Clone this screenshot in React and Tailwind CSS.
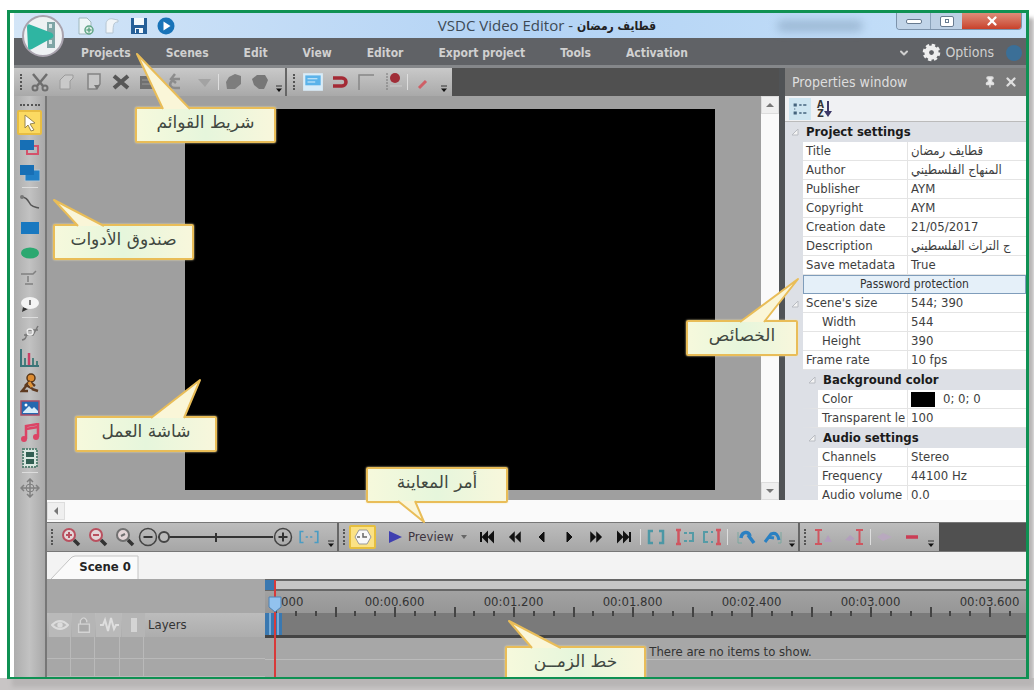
import { X, ChevronDown, Pin } from "lucide-react";

const menuItems = ["Projects", "Scenes", "Edit", "View", "Editor", "Export project", "Tools", "Activation"];

const properties = [
  { type: "group", label: "Project settings" },
  { label: "Title", value: "قطايف رمضان" },
  { label: "Author", value: "المنهاج الفلسطيني" },
  { label: "Publisher", value: "AYM" },
  { label: "Copyright", value: "AYM" },
  { label: "Creation date", value: "21/05/2017" },
  { label: "Description", value: "ج التراث الفلسطيني" },
  { label: "Save metadata", value: "True" },
  { type: "button", label: "Password protection" },
  { label: "Scene's size", value: "544; 390", open: true },
  { label: "Width", value: "544", indent: true },
  { label: "Height", value: "390", indent: true },
  { label: "Frame rate", value: "10 fps" },
  { type: "group", label: "Background color", indent: true },
  { label: "Color", value: "0; 0; 0", indent: true, nested: true, swatch: true },
  { label: "Transparent le", value: "100", indent: true, nested: true },
  { type: "group", label: "Audio settings", indent: true },
  { label: "Channels", value: "Stereo", indent: true, nested: true },
  { label: "Frequency", value: "44100 Hz", indent: true, nested: true },
  { label: "Audio volume", value: "0.0", indent: true, nested: true },
];

const times = ["00:00.600", "00:01.200", "00:01.800", "00:02.400", "00:03.000", "00:03.600"];

function Icon({ children, className = "size-5" }) {
  return (
    <svg viewBox="0 0 20 20" fill="none" className={`${className} shrink-0`} aria-hidden="true">
      {children}
    </svg>
  );
}

function ToolButton({ label, children, className = "w-[27px]" }) {
  return (
    <button type="button" aria-label={label} className={`flex h-6 shrink-0 items-center justify-center ${className}`}>
      {children}
    </button>
  );
}

function Grip() {
  return <span className="mx-1 h-4 w-0 shrink-0 border-l-2 border-dotted border-[#555]" />;
}

function Divider() {
  return <span className="h-4 w-px shrink-0 bg-[#dedede]" />;
}

function More() {
  return (
    <button type="button" aria-label="More buttons" className="flex h-6 w-3 shrink-0 items-end justify-center pb-px">
      <svg viewBox="0 0 8 8" className="size-2" aria-hidden="true">
        <path d="M1 1h6" stroke="#333" />
        <path d="M1 3.5h6L4 7z" fill="#111" />
      </svg>
    </button>
  );
}

function Callout({ position, tail, children }) {
  return (
    <div className={`absolute z-20 ${position}`}>
      <div className="flex h-9 items-center justify-center rounded-xs border-2 border-[#e9bd58] bg-linear-to-r from-[#f6f9dc] via-[#e6f6dc] to-[#f8f7dc] pb-1 font-['DejaVu_Sans',sans-serif] text-[17px] whitespace-nowrap text-[#414841] shadow-[0_0_2px_#f7e7ae]">
        <span dir="rtl">{children}</span>
      </div>
      <svg className="absolute top-0 left-0 h-9 w-full overflow-visible" aria-hidden="true">
        <path d={tail} fill="#faf6d8" stroke="#e9bd58" strokeWidth="2" strokeLinejoin="round" />
      </svg>
    </div>
  );
}

function TitleBar() {
  return (
    <header className="flex h-[25px] shrink-0 items-center bg-linear-to-r from-[#d3e5f7] via-[#b3d3f5] to-[#c6e0f8] pl-[61px]">
      <div className="flex w-[110px] shrink-0 gap-[7px]">
        <button type="button" aria-label="New project">
          <Icon>
            <path d="M4 2h8l4 4v12H4z" fill="#eef6f8" stroke="#9fb8bd" />
            <circle cx="14" cy="14" r="4" fill="#dceee6" stroke="#5fa586" strokeWidth="1.500" />
            <path d="M14 11.500v5M11.500 14h5" stroke="#5fa586" strokeWidth="1.500" />
          </Icon>
        </button>
        <button type="button" aria-label="Open project">
          <Icon>
            <path d="M4 17V8c0-4 4-6 7-5l5 1v2c-4 0-5 2-5 11z" fill="#f1f5f8" stroke="#b6c6d2" />
          </Icon>
        </button>
        <button type="button" aria-label="Save project">
          <Icon>
            <path d="M2 2h16v16H2z" fill="#255f98" />
            <path d="M5 2h10v7H5zM6 12h8v5H6z" fill="#f3f8fc" />
            <path d="M7 13h3v4H7z" fill="#255f98" />
          </Icon>
        </button>
        <button type="button" aria-label="Play">
          <Icon>
            <circle cx="10" cy="10" r="8.500" fill="#1873b8" />
            <path d="M7.500 5.500v9l7-4.500z" fill="#fff" />
          </Icon>
        </button>
      </div>
      <h1 className="flex min-w-0 flex-1 items-center justify-center gap-1 pl-[132px] font-['Open_Sans',sans-serif] text-[15px] whitespace-nowrap text-[#3d4a55]">
        <span>VSDC Video Editor -</span>
        <span dir="rtl" className="font-['DejaVu_Sans_Condensed','DejaVu_Sans',sans-serif] text-[12px] font-bold text-[#222]">
          قطايف رمضان
        </span>
      </h1>
      <span className="mr-[33px] h-3 w-[86px] shrink-0 rounded-full bg-[#7f9bb8]/50 blur-xs" />
      <div className="mr-1 flex h-[17px] w-[126px] shrink-0 self-start overflow-hidden rounded-b-sm border border-t-0 border-[#7d93ab]">
        <button type="button" aria-label="Minimize" className="flex w-[34px] items-center justify-center border-r border-[#8ba2b9] bg-[#c1d4e8]">
          <span className="h-[5px] w-4 rounded-xs border border-[#687b90] bg-white" />
        </button>
        <button type="button" aria-label="Maximize" className="flex w-[31px] items-center justify-center bg-[#bdd0e4]">
          <span className="flex h-[11px] w-3.5 items-center justify-center rounded-xs border border-[#687b90] bg-white">
            <span className="size-1 border border-[#687b90]" />
          </span>
        </button>
        <button type="button" aria-label="Close" className="flex flex-1 items-center justify-center bg-linear-to-b from-[#dd8c79] to-[#c8402a]">
          <X className="size-3.5 text-white" strokeWidth={4} />
        </button>
      </div>
    </header>
  );
}

function MenuBar() {
  return (
    <nav className="flex h-[30px] shrink-0 items-center border-b-3 border-[#85878a] bg-[#606266] pt-0.5 pr-1 pl-[67px] text-[#d0d0d0]">
      <ul className="flex gap-[35px] text-[12px] font-bold whitespace-nowrap">
        {menuItems.map((item) => (
          <li key={item}>
            <a href="#">{item}</a>
          </li>
        ))}
      </ul>
      <div className="ml-auto flex items-center">
        <ChevronDown className="mr-3 size-3" strokeWidth={4} />
        <button type="button" className="flex items-center gap-1 text-[14px]">
          <svg viewBox="0 0 20 20" className="size-[19px]" aria-hidden="true">
            <circle cx="10" cy="10" r="7.500" fill="none" stroke="#eee" strokeWidth="3.500" strokeDasharray="3.400 2.490" />
            <circle cx="10" cy="10" r="5" fill="none" stroke="#eee" strokeWidth="5" />
            <circle cx="10" cy="10" r="2" fill="#606266" />
          </svg>
          Options
        </button>
        <span className="ml-3 size-4 rounded-full bg-[#3b6f97]" />
      </div>
    </nav>
  );
}

function EditToolbar() {
  return (
    <div className="flex h-7 shrink-0 bg-[#505050]">
      <div className="flex items-center border-r-2 border-[#666] bg-linear-to-b from-[#c9c9c9] to-[#a9a9a9] pl-0.5">
        <Grip />
        <ToolButton label="Cut">
          <Icon>
            <path d="M3 2l10 12M17 2L7 14" stroke="#6e6e6e" strokeWidth="2.500" />
            <circle cx="5" cy="16" r="2.500" stroke="#6e6e6e" strokeWidth="2" />
            <circle cx="15" cy="16" r="2.500" stroke="#6e6e6e" strokeWidth="2" />
          </Icon>
        </ToolButton>
        <ToolButton label="Copy">
          <Icon><path d="M3 17V8l5-5h8v3l-3 3v8z" fill="#c9c9c9" stroke="#9a9a9a" /></Icon>
        </ToolButton>
        <ToolButton label="Paste">
          <Icon>
            <path d="M4 2h12v10l-4 5H4z" fill="#c6c6c6" stroke="#848484" strokeWidth="1.500" />
            <path d="M10 13l6 0-3 5z" fill="#777" />
          </Icon>
        </ToolButton>
        <ToolButton label="Delete">
          <Icon><path d="M3 4l14 12M17 4L3 16" stroke="#575757" strokeWidth="4" /></Icon>
        </ToolButton>
        <ToolButton label="Properties">
          <Icon>
            <path d="M2 4h15v13H2z" fill="#707070" />
            <path d="M4 8h10M4 12h10" stroke="#999" />
          </Icon>
        </ToolButton>
        <ToolButton label="Undo" className="w-[30px]">
          <Icon><path d="M14 16H9c-4 0-6-3-4-6l3-3h6M9 2L5 7l5 4" stroke="#8c8c8c" strokeWidth="2.500" /></Icon>
        </ToolButton>
        <ToolButton label="Redo">
          <Icon><path d="M3 7h13l-6 8z" fill="#a3a3a3" /></Icon>
        </ToolButton>
        <Divider />
        <ToolButton label="Group">
          <Icon><path d="M3 10l3-5 6-3 6 2v8l-6 5H4z" fill="#7d7d7d" /></Icon>
        </ToolButton>
        <ToolButton label="Ungroup">
          <Icon><path d="M2 7l5-4h8l3 5-2 5-2 4H9l-5-4z" fill="#777" /></Icon>
        </ToolButton>
        <More />
      </div>
      <div className="flex items-center bg-linear-to-b from-[#c9c9c9] to-[#a9a9a9] pr-0.5">
        <span className="w-0.5" />
        <Grip />
        <ToolButton label="Show grid">
          <Icon className="size-[22px]">
            <path d="M1 2h18v16H1z" fill="#d9ecf8" />
            <path d="M3 4h14v9H3z" fill="#5bb3ea" />
            <path d="M5 7h9M5 10h7" stroke="#d9f0fc" />
          </Icon>
        </ToolButton>
        <ToolButton label="Snap">
          <Icon><path d="M3 6h9a4 4 0 010 8H3" stroke="#a42a35" strokeWidth="3.500" /></Icon>
        </ToolButton>
        <ToolButton label="Align to edge">
          <Icon><path d="M2 18V3h15" stroke="#878787" strokeWidth="1.500" /></Icon>
        </ToolButton>
        <ToolButton label="Magnet to edge">
          <Icon>
            <path d="M3 1v18" stroke="#777" strokeDasharray="2 1" />
            <circle cx="11" cy="6" r="5" fill="#a02d37" />
            <path d="M6 14h12" stroke="#ccc" />
          </Icon>
        </ToolButton>
        <Divider />
        <ToolButton label="Draw" className="w-[30px]">
          <Icon><path d="M6 16l7-7" stroke="#cf5f66" strokeWidth="3" /></Icon>
        </ToolButton>
        <More />
      </div>
    </div>
  );
}

function SideSeparator() {
  return <span className="my-0.5 h-px w-4 shrink-0 bg-[#ddd]" />;
}

function SideButton({ label, active, children }) {
  return (
    <button
      type="button"
      aria-label={label}
      className={
        active
          ? "flex h-[25px] w-[25px] shrink-0 items-center justify-center rounded-xs border-2 border-[#e8bd42] bg-[#fbda62]"
          : "flex h-[25px] w-[25px] shrink-0 items-center justify-center"
      }
    >
      {children}
    </button>
  );
}

function ToolBox() {
  return (
    <aside className="flex w-[33px] shrink-0 flex-col items-center border-r-2 border-[#777] bg-linear-to-r from-[#adadad] via-[#c2c2c2] to-[#a9a9a9] pt-2">
      <span className="mb-1 h-0 w-5 shrink-0 border-t-2 border-dotted border-[#555]" />
      <SideButton label="Select" active>
        <Icon>
          <path d="M5 2l10 8-5 1 4 6-3 1-3-6-3 3z" fill="#fff" stroke="#98864d" />
        </Icon>
      </SideButton>
      <SideButton label="Add sprite">
        <Icon>
          <path d="M7 8h11v8H7z" stroke="#d4526b" strokeWidth="2" />
          <path d="M0 2h14v10H0z" fill="#176fb5" />
        </Icon>
      </SideButton>
      <SideButton label="Duplicate">
        <Icon>
          <path d="M5 7h15v11H5z" fill="#2180c6" stroke="#b5c5d2" />
          <path d="M0 2h14v10H0z" fill="#176fb5" />
        </Icon>
      </SideButton>
      <SideSeparator />
      <SideButton label="Line">
        <Icon><path d="M1 4c6 0 7 4 10 8 2 2 4 2 8 3" stroke="#555" strokeWidth="1.500" /><circle cx="2" cy="4" r="2" fill="#777" /></Icon>
      </SideButton>
      <SideButton label="Rectangle">
        <Icon><path d="M1 4h18v12H1z" fill="#1978c0" /></Icon>
      </SideButton>
      <SideButton label="Ellipse">
        <Icon><ellipse cx="10" cy="10" rx="9" ry="5.500" fill="#2ba870" /></Icon>
      </SideButton>
      <SideButton label="Text">
        <Icon><path d="M1 6h12l3-3M5 16h8M8 8v6" stroke="#808080" strokeWidth="1.500" /></Icon>
      </SideButton>
      <SideButton label="Tooltip">
        <Icon>
          <path d="M3 14l-1 5 6-3z" fill="#333" />
          <ellipse cx="10" cy="10" rx="9" ry="6" fill="#f4f4f4" />
          <path d="M10 7v5" stroke="#555" strokeWidth="1.500" />
        </Icon>
      </SideButton>
      <SideSeparator />
      <SideButton label="Free shape">
        <Icon>
          <path d="M2 17c8-1 1-10 8-10h8M4 12h9l5-9" stroke="#777" strokeWidth="1.500" />
          <circle cx="10" cy="9" r="3" stroke="#eee" strokeWidth="1.500" />
        </Icon>
      </SideButton>
      <SideButton label="Chart">
        <Icon>
          <path d="M1 1v17h18" stroke="#3b7479" strokeWidth="2" />
          <path d="M5 17V10M13 17V10M17 17v-4" stroke="#477f7c" strokeWidth="2" />
          <path d="M9 17V5" stroke="#c94066" strokeWidth="2.500" />
        </Icon>
      </SideButton>
      <SideButton label="Animation">
        <Icon>
          <circle cx="11" cy="5" r="4" fill="#dc8b31" stroke="#583719" strokeWidth="1.500" />
          <path d="M10 8l-4 4 7 4M10 9l5 4M7 12l-5 6h6M12 16l6 2" stroke="#5e3a20" strokeWidth="2.500" />
          <path d="M9 9l3 5" stroke="#e19436" strokeWidth="3" />
        </Icon>
      </SideButton>
      <SideButton label="Image">
        <Icon>
          <path d="M1 3h18v14H1z" fill="#2668b0" stroke="#aa4c66" strokeWidth="1.500" />
          <path d="M3 14l6-6 3 3 2-2 4 4v2H3z" fill="#d7edfa" />
          <circle cx="6" cy="7" r="1.500" fill="#fff" />
        </Icon>
      </SideButton>
      <SideButton label="Audio">
        <Icon>
          <path d="M6 16V3l12-2v13M6 6l12-2" stroke="#dc4465" strokeWidth="2.500" />
          <circle cx="4" cy="16" r="3" fill="#dc4465" />
          <circle cx="16" cy="14" r="3" fill="#dc4465" />
        </Icon>
      </SideButton>
      <SideButton label="Video">
        <Icon>
          <path d="M3 1h14v18H3z" fill="#d9e7e0" stroke="#5d8678" strokeDasharray="2 1" strokeWidth="2" />
          <path d="M6 4h8v5H6zM6 11h8v5H6z" fill="#315f52" />
        </Icon>
      </SideButton>
      <SideSeparator />
      <SideButton label="Move">
        <Icon>
          <path d="M10 1v18M1 10h18M7 4l3-3 3 3M7 16l3 3 3-3M4 7l-3 3 3 3M16 7l3 3-3 3" stroke="#808080" strokeWidth="1.500" />
          <circle cx="10" cy="10" r="4" stroke="#808080" />
        </Icon>
      </SideButton>
    </aside>
  );
}

function ScrollArrow({ d, label }) {
  return (
    <button type="button" aria-label={label} className="flex size-[18px] shrink-0 items-center justify-center border border-[#ddd] bg-[#efefef]">
      <svg viewBox="0 0 10 10" className="size-[10px]" aria-hidden="true">
        <path d={d} fill="#777" />
      </svg>
    </button>
  );
}

function Stage() {
  return (
    <div className="flex min-h-0 min-w-0 flex-1">
      <div className="flex min-w-0 flex-1 bg-[#9f9f9f] pt-[13px] pr-[46px] pb-[10px] pl-[138px]">
        <div className="flex-1 bg-black" />
      </div>
      <div className="flex w-[18px] shrink-0 flex-col justify-between bg-[#fafafa]">
        <ScrollArrow label="Scroll up" d="M1 7h8L5 3z" />
        <ScrollArrow label="Scroll down" d="M1 3h8L5 7z" />
      </div>
    </div>
  );
}

function Twisty() {
  return (
    <svg viewBox="0 0 8 8" className="size-2 shrink-0" aria-hidden="true">
      <path d="M1 7h6V1z" fill="#f4f4f4" stroke="#b9bcc2" />
    </svg>
  );
}

function PropertyRow({ row }) {
  if (row.type === "group") {
    return (
      <tr className="h-5 bg-[#dde0e6]">
        <th colSpan={3} scope="colgroup" className="text-left font-bold text-[#1b1b1b]">
          <span className={row.indent ? "flex items-center gap-[7px] pl-[23px]" : "flex items-center gap-[7px] pl-1.5"}>
            <Twisty />
            {row.label}
          </span>
        </th>
      </tr>
    );
  }
  if (row.type === "button") {
    return (
      <tr className="h-[19px]">
        <td className="bg-[#dde0e6]" />
        <td colSpan={2} className="p-0">
          <button type="button" className="block h-[19px] w-full border border-[#7f9dbb] bg-[#e5f0f9] text-center text-[12px] leading-[17px] text-[#333]">
            {row.label}
          </button>
        </td>
      </tr>
    );
  }
  return (
    <tr className="h-[19px]">
      <td className="bg-[#dde0e6] pl-1.5">{row.open && <Twisty />}</td>
      <th
        scope="row"
        className={
          row.nested
            ? "border-r border-b border-l-[15px] border-r-[#e4e4e4] border-b-[#e4e4e4] border-l-[#dde0e6] pl-1 text-left font-normal whitespace-nowrap"
            : row.indent
              ? "border-r border-b border-[#e4e4e4] pl-[19px] text-left font-normal whitespace-nowrap"
              : "border-r border-b border-[#e4e4e4] pl-[3px] text-left font-normal whitespace-nowrap"
        }
      >
        {row.label}
      </th>
      <td className="overflow-hidden border-b border-[#e4e4e4] pl-[3px] whitespace-nowrap">
        {row.swatch ? (
          <span className="flex items-center gap-2">
            <span className="h-[15px] w-6 bg-black" />
            {row.value}
          </span>
        ) : (
          row.value
        )}
      </td>
    </tr>
  );
}

function PropertiesWindow() {
  return (
    <section className="flex w-[247px] shrink-0 flex-col overflow-hidden border-l-6 border-[#505356] bg-[#dde0e6]">
      <header className="flex h-7 shrink-0 items-center bg-[#7b7b7b] pr-2 pl-[7px] text-[14px] text-[#dedede]">
        <h2 className="flex-1">Properties window</h2>
        <button type="button" aria-label="Pin" className="mr-2"><Pin className="size-3" fill="#eee" strokeWidth={3} /></button>
        <button type="button" aria-label="Close properties"><X className="size-3.5" strokeWidth={4} /></button>
      </header>
      <div className="flex h-[26px] shrink-0 items-center gap-1.5 border-b border-[#bbb] bg-[#f0f1f3] pl-1">
        <button type="button" aria-label="Categorized" className="flex size-[22px] items-center justify-center bg-[#cfe6f1]">
          <Icon className="size-4">
            <path d="M2 3h4v4H2zM2 13h4v4H2z" fill="#45647d" />
            <path d="M9 5h3M14 5h4M9 15h3M14 15h4M3 10h1" stroke="#45647d" strokeWidth="2" />
          </Icon>
        </button>
        <button type="button" aria-label="Alphabetical" className="flex items-center">
          <span className="flex flex-col text-[10px] leading-[9px] font-bold text-[#333]"><span>A</span><span>Z</span></span>
          <svg viewBox="0 0 8 18" className="h-[18px] w-2" aria-hidden="true">
            <path d="M4 1v12" stroke="#3c3868" strokeWidth="2" />
            <path d="M0 11h8l-4 6z" fill="#3c3868" />
          </svg>
        </button>
      </div>
      <div className="min-h-0 flex-1 overflow-hidden">
        <table className="w-full table-fixed border-separate border-spacing-0 bg-white text-[13px] leading-[18px] text-[#3e3e3e]">
          <colgroup>
            <col className="w-[18px]" />
            <col className="w-[105px]" />
            <col />
          </colgroup>
          <tbody>
            {properties.map((row) => (
              <PropertyRow key={row.label} row={row} />
            ))}
          </tbody>
        </table>
      </div>
    </section>
  );
}

function Zoom({ color, d }) {
  return (
    <Icon>
      <circle cx="8" cy="8" r="6" fill="#e3d5d7" stroke={color} strokeWidth="2" />
      <path d={d} stroke={color} strokeWidth="2" />
      <path d="M13 13l5 5" stroke="#333" strokeWidth="3.500" />
    </Icon>
  );
}

function PlaybackToolbar() {
  return (
    <div className="flex h-[30px] shrink-0 border-y border-[#777] bg-[#505050]">
      <div className="flex items-center border-r-2 border-[#666] bg-linear-to-b from-[#bdbdbd] to-[#a6a6a6]">
        <Grip />
        <ToolButton label="Zoom in"><Zoom color="#b9505f" d="M8 5v6M5 8h6" /></ToolButton>
        <ToolButton label="Zoom out"><Zoom color="#b9505f" d="M5 8h6" /></ToolButton>
        <ToolButton label="Zoom to fit"><Zoom color="#707070" d="M6 9l4-2" /></ToolButton>
        <button type="button" aria-label="Decrease scale">
          <Icon><circle cx="10" cy="10" r="8.500" stroke="#444" strokeWidth="1.500" /><path d="M5.500 10h9" stroke="#333" strokeWidth="2" /></Icon>
        </button>
        <input
          type="range"
          min="0"
          max="100"
          defaultValue="0"
          aria-label="Timeline scale"
          className="h-3.5 w-[115px] appearance-none bg-[linear-gradient(#333,#333),linear-gradient(#333,#333)] bg-[length:100%_2px,2px_9px] bg-center bg-no-repeat [&::-webkit-slider-thumb]:size-3 [&::-webkit-slider-thumb]:appearance-none [&::-webkit-slider-thumb]:rounded-full [&::-webkit-slider-thumb]:border-2 [&::-webkit-slider-thumb]:border-[#444] [&::-webkit-slider-thumb]:bg-[#bbb]"
        />
        <button type="button" aria-label="Increase scale">
          <Icon><circle cx="10" cy="10" r="8.500" stroke="#444" strokeWidth="1.500" /><path d="M5.500 10h9M10 5.500v9" stroke="#333" strokeWidth="2" /></Icon>
        </button>
        <ToolButton label="Fit range" className="w-8">
          <Icon className="size-[22px]"><path d="M5 5H2v10h3M15 5h3v10h-3M7 10h2M11 10h2" stroke="#4a9cc3" strokeWidth="1.500" /></Icon>
        </ToolButton>
        <More />
      </div>
      <div className="flex items-center border-r-2 border-[#666] bg-linear-to-b from-[#bdbdbd] to-[#a6a6a6]">
        <Grip />
        <ToolButton label="Loop" className="w-[27px] rounded-xs border-2 border-[#e6bf3e] bg-[#fbe285]">
          <Icon><path d="M6 3h8l4 7-4 7H6l-4-7z" fill="#f8f8f8" stroke="#999" /><path d="M10 6v4h4M4 10h3" stroke="#666" strokeWidth="1.500" /></Icon>
        </ToolButton>
        <button type="button" className="ml-3 flex items-center gap-1.5 text-[13px] text-[#3d3440]">
          <svg viewBox="0 0 14 14" className="size-3.5" aria-hidden="true"><path d="M1 1v12l13-6z" fill="#3f3fb0" /></svg>
          Preview
        </button>
        <ToolButton label="Preview options" className="w-[21px]">
          <svg viewBox="0 0 6 6" className="size-1.5" aria-hidden="true"><path d="M0 1h6L3 5z" fill="#666" /></svg>
        </ToolButton>
        <ToolButton label="To start"><Icon><path d="M3 5v10M9 6l-4 4 4 4zM15 6l-4 4 4 4z" fill="#111" stroke="#111" strokeWidth="2" /></Icon></ToolButton>
        <ToolButton label="Rewind"><Icon><path d="M9 6l-4 4 4 4zM15 6l-4 4 4 4z" fill="#111" stroke="#111" strokeWidth="1.500" /></Icon></ToolButton>
        <ToolButton label="Previous frame"><Icon><path d="M12 5l-5 5 5 5z" fill="#111" stroke="#111" /></Icon></ToolButton>
        <ToolButton label="Next frame"><Icon><path d="M8 5l5 5-5 5z" fill="#111" stroke="#111" /></Icon></ToolButton>
        <ToolButton label="Fast forward"><Icon><path d="M5 6l4 4-4 4zM11 6l4 4-4 4z" fill="#111" stroke="#111" strokeWidth="1.500" /></Icon></ToolButton>
        <ToolButton label="To end"><Icon><path d="M17 5v10M5 6l4 4-4 4zM11 6l4 4-4 4z" fill="#111" stroke="#111" strokeWidth="2" /></Icon></ToolButton>
        <span className="w-1" />
        <Divider />
        <ToolButton label="Set region" className="w-[30px]"><Icon><path d="M7 4H3v12h4M13 4h4v12h-4" stroke="#4c97a5" strokeWidth="2.500" /></Icon></ToolButton>
        <ToolButton label="Region start"><Icon><path d="M1 3h5M1 17h5M3.500 3v14" stroke="#cf5660" strokeWidth="2.500" /><path d="M9 6h3M9 14h3M14 6h4v8h-4" stroke="#559ba6" strokeWidth="2" /></Icon></ToolButton>
        <ToolButton label="Region end"><Icon><path d="M14 3h5M14 17h5M16.500 3v14" stroke="#cf5660" strokeWidth="2.500" /><path d="M6 5H2v10h4M9 5h2M9 15h2" stroke="#559ba6" strokeWidth="2" /></Icon></ToolButton>
        <span className="w-0.5" />
        <Divider />
        <span className="w-1" />
        <ToolButton label="Rotate left"><Icon><path d="M2 5v11h4" stroke="#7aa69e" /><path d="M5 11c1-7 8-7 9-2M12 8l6 8" stroke="#2a80c2" strokeWidth="3.500" /></Icon></ToolButton>
        <ToolButton label="Rotate right"><Icon><path d="M18 5v11h-3" stroke="#7aa69e" /><path d="M2 15l6-8c5-2 7 1 8 6M5 10l6 1" stroke="#2a80c2" strokeWidth="3" /></Icon></ToolButton>
        <More />
      </div>
      <div className="flex items-center bg-linear-to-b from-[#bdbdbd] to-[#a6a6a6]">
        <Grip />
        <ToolButton label="Trim start"><Icon><path d="M1 3h7M1 17h7M4.500 3v14" stroke="#cf5660" strokeWidth="2" /><path d="M10 15l4-7 4 7z" fill="#b3a0bd" /></Icon></ToolButton>
        <ToolButton label="Trim end" className="w-[33px]"><Icon><path d="M12 3h7M12 17h7M15.500 3v14" stroke="#cf5660" strokeWidth="2" /><path d="M1 13l5-5 5 4-5 2z" fill="#b3a0bd" /></Icon></ToolButton>
        <Divider />
        <ToolButton label="Cut region"><Icon><path d="M2 10l6-4 9 4-9 4z" fill="#b9a9bf" /></Icon></ToolButton>
        <ToolButton label="Remove"><Icon><path d="M4 10h12" stroke="#cb3d55" strokeWidth="3.500" /></Icon></ToolButton>
        <More />
        <span className="w-0.5" />
      </div>
    </div>
  );
}

function SceneTabs() {
  return (
    <div className="flex h-[27px] shrink-0 items-end bg-[#f3f3f3] pl-1">
      <button type="button" className="relative flex h-6 w-[88px] items-center justify-end pr-2 text-[13px] font-bold text-[#252525]">
        <svg viewBox="0 0 88 24" className="absolute inset-0" aria-hidden="true">
          <path d="M0 24L18 5q3-4 6-4h63v23" fill="#fafafa" stroke="#c4c4c4" />
        </svg>
        <span className="relative">Scene 0</span>
      </button>
    </div>
  );
}

function Ruler() {
  const ticks = Array.from({ length: 39 }, (_, i) => i);
  return (
    <div className="relative min-w-0 flex-1 overflow-hidden bg-[#a7a7a7]">
      <div className="h-3 border-y-2 border-[#666] bg-[#c5c5c5]" />
      <div className="flex h-[22px] bg-linear-to-b from-[#a2a2a2] to-[#969696] text-[13px] leading-[22px] text-[#333]">
        <span className="w-[70px] shrink-0 pl-4">000</span>
        {times.map((time) => (
          <time key={time} className="w-[119px] shrink-0 text-center">
            {time}
          </time>
        ))}
      </div>
      <div className="h-[25px] border-b-3 border-[#444] bg-[#7a7a7a]" />
      <div className="h-[22px] border-b border-[#bbb] text-center text-[13px] leading-[28px] text-[#333]">
        <p className="pl-[170px]">There are no items to show.</p>
      </div>
      <svg className="absolute top-0 left-0 h-full w-full" aria-hidden="true">
        {ticks.map((i) => (
          <rect
            key={i}
            x={Math.round(10 + (i * 119) / 6)}
            y={i % 3 === 0 ? 28 : 32}
            width="2"
            height={i % 3 === 0 ? 10 : 5}
            fill="#444"
          />
        ))}
        <path d="M0 1h9v10H0zM0 34h17v22H0z" fill="#3a78b0" />
        <path d="M5 34v22M13 34v22" stroke="#78acd8" strokeWidth="2" />
        <path d="M10 1v98" stroke="#d83a3a" strokeWidth="2" />
        <path d="M4 18h12v10l-6 5-6-5z" fill="#92c2ee" stroke="#4e82b5" />
      </svg>
    </div>
  );
}

function Timeline() {
  return (
    <section className="flex h-[98px] shrink-0 bg-[#a7a7a7]">
      <div className="flex w-[218px] shrink-0 flex-col pt-[34px]">
        <div className="flex h-6 items-center gap-px bg-linear-to-b from-[#bcbcbc] to-[#adadad] pl-0.5 text-[13px] text-[#333]">
          <ToolButton label="Visible" className="w-[22px] bg-[#b9b9b9]">
            <Icon className="size-[18px]"><path d="M1 10q9-9 18 0-9 9-18 0z" stroke="#dcdcdc" strokeWidth="2" /><circle cx="10" cy="10" r="3" fill="#dcdcdc" /></Icon>
          </ToolButton>
          <ToolButton label="Lock" className="w-[23px] bg-[#b5b5b5]">
            <Icon className="size-[18px]"><path d="M4 9h12v9H4zM6 9V5q4-6 7 0v2" stroke="#d4d4d4" strokeWidth="1.500" fill="#aaa" /></Icon>
          </ToolButton>
          <ToolButton label="Sound" className="w-[25px] bg-[#b9b9b9]">
            <Icon><path d="M1 10h3l2-5 3 11 3-13 3 11 2-4h3" stroke="#dedede" strokeWidth="2" /></Icon>
          </ToolButton>
          <ToolButton label="Mode" className="w-[23px] bg-[#b5b5b5]">
            <Icon><path d="M7 3h6v14H7z" fill="#d4d4d4" /></Icon>
          </ToolButton>
          <span className="pl-0.5">Layers</span>
        </div>
        <div className="grid flex-1 grid-cols-[24px_24px_25px_24px_1fr] grid-rows-[22px_1fr]">
          {Array.from({ length: 10 }, (_, i) => (
            <span key={i} className={i % 5 < 4 ? "border-r border-b border-[#b9b9b9]" : "border-b border-[#b9b9b9]"} />
          ))}
        </div>
      </div>
      <Ruler />
    </section>
  );
}

export default function App() {
  return (
    <div className="flex h-screen min-h-[520px] bg-linear-to-t from-[#c8c5c5] from-[12px] to-white to-[12px] pt-[10px] pr-[5px] pb-[11px] pl-[7px] font-['DejaVu_Sans_Condensed','DejaVu_Sans',sans-serif]">
      <main className="relative flex min-w-0 flex-1 overflow-hidden border-3 border-b-2 border-[#0f9153] bg-white pl-1 shadow-[5px_8px_4px_#b8b5b5]">
        <div className="flex min-w-0 flex-1 flex-col">
          <TitleBar />
          <MenuBar />
          <div className="flex min-h-0 flex-1 flex-col">
            <div className="flex min-h-0 flex-1">
              <div className="flex min-w-0 flex-1 flex-col">
                <EditToolbar />
                <div className="flex min-h-0 flex-1">
                  <ToolBox />
                  <Stage />
                </div>
              </div>
              <PropertiesWindow />
            </div>
            <div className="flex shrink-0">
              <div className="w-[33px] shrink-0 border-r-2 border-[#777] bg-linear-to-r from-[#adadad] via-[#c2c2c2] to-[#a9a9a9]" />
              <div className="flex min-w-0 flex-1 flex-col">
                <div className="flex h-[22px] shrink-0 items-center bg-[#fafafa]">
                  <ScrollArrow label="Scroll left" d="M7 1v8L3 5z" />
                </div>
                <PlaybackToolbar />
                <SceneTabs />
                <Timeline />
              </div>
            </div>
          </div>
        </div>
        <button type="button" aria-label="Main menu" className="absolute top-0.5 left-[10px] z-10">
          <svg viewBox="0 0 46 46" className="size-[46px]" aria-hidden="true">
            <circle cx="23" cy="21" r="20" fill="#eef1f3" stroke="#a9a3ae" strokeWidth="2" />
            <path d="M27 7h8v26h-8z" fill="#7fa5a5" />
            <path d="M29 9h3v4h-3zM29 25h3v4h-3z" fill="#dce8e8" />
            <path d="M7 12q0-4 4-2l21 8q3 3 0 5L12 34q-4 2-4-2z" fill="#2fb5a2" />
          </svg>
        </button>
        <Callout position="top-[94px] left-[125px] w-[141px]" tail="M28 2L2 -53L55 2">شريط القوائم</Callout>
        <Callout position="top-[211px] left-[43px] w-[141px]" tail="M25 2L1 -24L51 2">صندوق الأدوات</Callout>
        <Callout position="bottom-[225px] left-[65px] w-[142px]" tail="M76 2L125 -36L109 2">شاشة العمل</Callout>
        <Callout position="right-[228px] bottom-[321px] w-[112px]" tail="M54 2L112 -41L78 2">الخصائص</Callout>
        <Callout position="bottom-[174px] left-[356px] w-[142px]" tail="M32 34L58 55L49 34">أمر المعاينة</Callout>
        <Callout position="bottom-[-5px] left-[495px] w-[141px]" tail="M27 2L4 -25L56 2">خط الزمــن</Callout>
      </main>
    </div>
  );
}
